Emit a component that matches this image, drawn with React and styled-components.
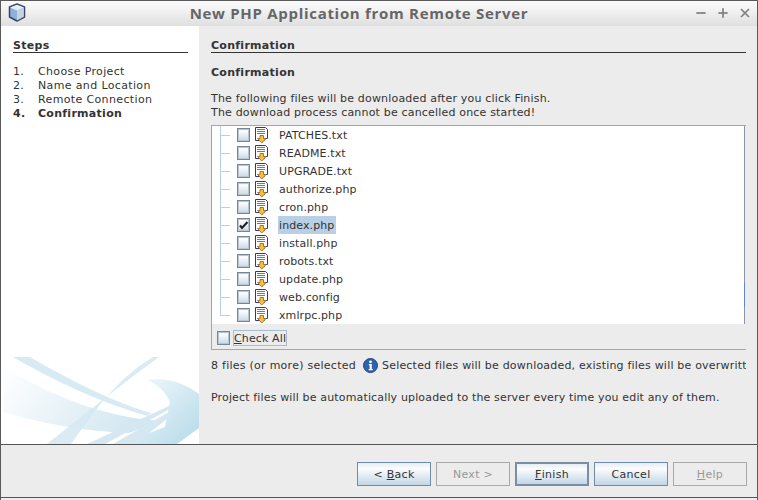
import React from "react";
import styled, { createGlobalStyle } from "styled-components";
import { X, Plus, Minus } from "lucide-react";

const Global = createGlobalStyle`
  html, body {
    margin: 0;
    padding: 0;
    background: #ececec;
  }
  * {
    box-sizing: border-box;
  }
`;

const Frame = styled.div`
  width: 758px;
  height: 500px;
  display: flex;
  flex-direction: column;
  overflow: hidden;
  background: #ececec;
  border: 1px solid #5a5a5a;
  border-bottom: 0;
  font-family: "DejaVu Sans", sans-serif;
  font-size: 11px;
  color: #333;
`;

const TitleBar = styled.div`
  height: 25px;
  flex: none;
  display: flex;
  align-items: center;
  padding: 0 4px 2px 7px;
  background: linear-gradient(#fafafa, #f4f4f4 30%, #dfdfdf);
`;

const TitleText = styled.div`
  flex: 1;
  text-align: center;
  font-family: "Open Sans", sans-serif;
  font-weight: 700;
  font-size: 15px;
  letter-spacing: 0.7px;
  color: #666;
  padding-right: 1px;
`;

const WinButtons = styled.div`
  display: flex;
  gap: 6px;
  color: #808080;
  svg {
    display: block;
  }
`;

const Body = styled.div`
  flex: 1;
  min-height: 0;
  display: flex;
  border-bottom: 1px solid #555;
`;

const Sidebar = styled.div`
  width: 198px;
  flex: none;
  background: #fff;
  display: flex;
  flex-direction: column;
  padding-top: 12px;
`;

const SideHead = styled.div`
  margin: 0 11px 0 12px;
  height: 15px;
  line-height: 15px;
  font-weight: 700;
  letter-spacing: 0.28px;
  border-bottom: 1px solid #333;
`;

const StepList = styled.ol`
  list-style: none;
  margin: 12px 0 0;
  padding: 0 0 0 12px;
`;

const Step = styled.li`
  height: 14px;
  line-height: 14px;
  display: flex;
  letter-spacing: ${(p) => (p.$current ? "0.28px" : "0.36px")};
  font-weight: ${(p) => (p.$current ? 700 : 400)};
  span:first-child {
    width: 25px;
  }
`;

const SideArt = styled.svg`
  display: block;
  margin-top: auto;
  flex: none;
`;

const Main = styled.div`
  flex: 1;
  min-width: 0;
  padding: 12px 11px 0 12px;
  display: flex;
  flex-direction: column;
`;

const MainHead = styled(SideHead)`
  margin: 0;
`;

const SubHead = styled.div`
  margin-top: 12px;
  height: 14px;
  line-height: 15px;
  font-weight: 700;
  letter-spacing: 0.28px;
`;

const Para = styled.p`
  margin: 12px 0 -1px;
  padding-top: 1px;
  line-height: 14px;
  letter-spacing: 0.18px;
`;

const TreePanel = styled.div`
  margin-top: 6px;
  height: 225px;
  flex: none;
  border: 1px solid #a6a6a6;
  border-right: 0;
  display: flex;
  flex-direction: column;
`;

const TreeArea = styled.div`
  position: relative;
  height: 198px;
  flex: none;
  background: #fff;
  margin-right: 1px;
  border-right: 1px solid #8a96a8;
`;

const ScrollThumb = styled.div`
  position: absolute;
  right: -1px;
  top: 157px;
  width: 1px;
  height: 24px;
  background: #5f86d0;
`;

const Row = styled.div`
  height: 18px;
  display: flex;
  align-items: center;
  padding-left: 8px;
`;

const Connector = styled.div`
  width: 17px;
  height: 18px;
  flex: none;
  position: relative;
  &::before {
    content: "";
    position: absolute;
    left: 0;
    top: 0;
    width: 1px;
    height: ${(p) => (p.$last ? "9px" : "18px")};
    background: #b8cfe5;
  }
  &::after {
    content: "";
    position: absolute;
    left: 0;
    top: 9px;
    width: 10px;
    height: 1px;
    background: #b8cfe5;
  }
`;

const Box = styled.span`
  width: 13px;
  height: 14px;
  flex: none;
  display: flex;
  align-items: center;
  justify-content: center;
  border: 1px solid #73889b;
  box-shadow: inset 0 0 0 1px #b9c6d2;
  background: linear-gradient(#eef3f8, #fbfcfd 20%, #c5d8e8);
`;

const FileGlyph = styled.svg`
  display: block;
  flex: none;
  margin-left: 4px;
`;

const FileName = styled.span`
  margin-left: 9px;
  padding: 0 2px 0 1px;
  height: 18px;
  line-height: 19px;
  letter-spacing: 0.1px;
  background: ${(p) => (p.$selected ? "#b8cfe5" : "transparent")};
`;

const CheckBar = styled.div`
  flex: 1;
  display: flex;
  align-items: center;
  padding: 2px 0 0 5px;
`;

const CheckLabel = styled.span`
  margin-left: 3px;
  padding: 0;
  height: 16px;
  line-height: 15px;
  letter-spacing: 0.12px;
  border: 1px solid #a9bdd2;
`;

const StatusLine = styled.div`
  margin-top: 7px;
  height: 16px;
  display: flex;
  align-items: center;
  white-space: nowrap;
  overflow: hidden;
  letter-spacing: 0.26px;
`;

const StatusHint = styled.span`
  letter-spacing: 0.2px;
`;

const InfoIcon = styled.svg`
  display: block;
  flex: none;
  margin: 0 4px 0 7px;
`;

const Note = styled.div`
  margin-top: 18px;
  line-height: 14px;
  white-space: nowrap;
  letter-spacing: 0.15px;
`;

const Footer = styled.div`
  height: 53px;
  flex: none;
  display: flex;
  justify-content: flex-end;
  gap: 5px;
  padding: 17px 10px 0 0;
  border-bottom: 1px solid #555;
  margin-bottom: 2px;
`;

const Btn = styled.div`
  width: 74px;
  height: 24px;
  display: flex;
  align-items: center;
  justify-content: center;
  letter-spacing: 0.3px;
  color: ${(p) => (p.$off ? "#999" : "#333")};
  border: ${(p) => (p.$default ? "2px solid #7a8ea3" : p.$off ? "1px solid #a9a9a9" : "1px solid #6f8ba6")};
  background: ${(p) =>
    p.$off ? "#ececec" : "linear-gradient(#e4edf5, #fbfcfe 25%, #c3d6e6)"};
`;

const files = [
  "PATCHES.txt",
  "README.txt",
  "UPGRADE.txt",
  "authorize.php",
  "cron.php",
  "index.php",
  "install.php",
  "robots.txt",
  "update.php",
  "web.config",
  "xmlrpc.php",
];

function DownloadFile() {
  return (
    <FileGlyph width="15" height="17" viewBox="0 0 15 17">
      <path d="M1.5.5h10l2 2v9h-3v2h-9z" fill="#fff" stroke="#2f2fae" />
      <path d="M3 2.5h8M3 4.5h8M3 6.5h8" stroke="#6f6fc4" />
      <path d="M6 8.5h3.5v3H12l-4.25 4.5-4.25-4.5H6z" fill="#f6c23e" stroke="#a8781a" />
    </FileGlyph>
  );
}

function Check() {
  return (
    <svg width="10" height="10" viewBox="0 0 10 10">
      <path d="M1 5.5l2 2.5L8.5 2" fill="none" stroke="#222" strokeWidth="2.1" />
    </svg>
  );
}

const App = () => {
  return (
    <Frame>
      <Global />
      <TitleBar>
        <svg width="18" height="19" viewBox="0 0 18 19">
          <path d="M9 1l7.5 3v10L9 18 1.5 14V4z" fill="#8fb0d8" stroke="#36466a" strokeWidth="1.5" strokeLinejoin="round" />
          <path d="M2 4.5L9 7.5 16 4.5 9 1.8z" fill="#e6eef6" />
          <path d="M9 7.5V17.5L15.8 13.8V4.8z" fill="#c9d3dd" />
        </svg>
        <TitleText>New PHP Application from Remote Server</TitleText>
        <WinButtons>
          <Minus size={16} strokeWidth={2.6} strokeLinecap="butt" />
          <Plus size={16} strokeWidth={2.6} strokeLinecap="butt" />
          <X size={16} strokeWidth={2.6} strokeLinecap="butt" />
        </WinButtons>
      </TitleBar>
      <Body>
        <Sidebar>
          <SideHead>Steps</SideHead>
          <StepList>
            <Step><span>1.</span><span>Choose Project</span></Step>
            <Step><span>2.</span><span>Name and Location</span></Step>
            <Step><span>3.</span><span>Remote Connection</span></Step>
            <Step $current><span>4.</span><span>Confirmation</span></Step>
          </StepList>
          <SideArt width="198" height="87" viewBox="0 0 198 87">
            <defs>
              <linearGradient id="sweep" x1="0" y1="0" x2="1" y2="0.3">
                <stop offset="0" stopColor="#ffffff" />
                <stop offset="1" stopColor="#d3e7f1" />
              </linearGradient>
              <linearGradient id="swirl" x1="0" y1="0" x2="1" y2="1">
                <stop offset="0" stopColor="#f3f9fc" />
                <stop offset="1" stopColor="#b5dae9" />
              </linearGradient>
            </defs>
            <path d="M2 10C50 38 100 60 160 64L128 76C80 74 40 66 2 55z" fill="url(#sweep)" />
            <path d="M12 0H29C70 24 115 46 150 56L147 59C100 46 50 22 12 0z" fill="#d8eaf3" />
            <path d="M46 87C90 52 125 24 158 0L152 0C112 24 90 60 70 87z" fill="#d5e8f2" opacity="0.85" />
            <path d="M146 23C170 20 185 28 198 37V71L176 87H130L148 76 164 70 169 45C165 36 158 28 146 23z" fill="url(#swirl)" />
            <path d="M86 87L168 49 169 52 104 87zM112 87L168 55 166 62 134 87z" fill="#d5e8f2" />
          </SideArt>
        </Sidebar>
        <Main>
          <MainHead>Confirmation</MainHead>
          <SubHead>Confirmation</SubHead>
          <Para>
            The following files will be downloaded after you click Finish.
            <br />
            The download process cannot be cancelled once started!
          </Para>
          <TreePanel>
            <TreeArea>
              <ScrollThumb />
              {files.map((name, i) => (
                <Row key={name}>
                  <Connector $last={i === files.length - 1} />
                  <Box>{name === "index.php" && <Check />}</Box>
                  <DownloadFile />
                  <FileName $selected={name === "index.php"}>{name}</FileName>
                </Row>
              ))}
            </TreeArea>
            <CheckBar>
              <Box />
              <CheckLabel><u>C</u>heck All</CheckLabel>
            </CheckBar>
          </TreePanel>
          <StatusLine>
            8 files (or more) selected
            <InfoIcon width="15" height="15" viewBox="0 0 15 15">
              <circle cx="7.5" cy="7.5" r="7" fill="#2f62ad" stroke="#1f4583" />
              <circle cx="7.5" cy="3.8" r="1.4" fill="#fff" />
              <path d="M5.8 6h3v5h1v1.2H5.6V11h1V7.2h-.8z" fill="#fff" />
            </InfoIcon>
            <StatusHint>Selected files will be downloaded, existing files will be overwritten.</StatusHint>
          </StatusLine>
          <Note>Project files will be automatically uploaded to the server every time you edit any of them.</Note>
        </Main>
      </Body>
      <Footer>
        <Btn>&lt;&nbsp;<u>B</u>ack</Btn>
        <Btn $off>Next &gt;</Btn>
        <Btn $default><u>F</u>inish</Btn>
        <Btn>Cancel</Btn>
        <Btn $off><u>H</u>elp</Btn>
      </Footer>
    </Frame>
  );
};

export default App;
